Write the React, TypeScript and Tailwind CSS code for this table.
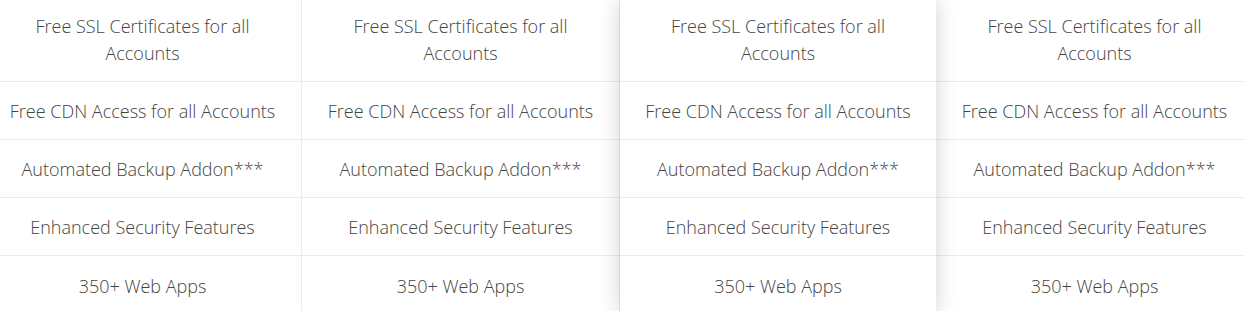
import React from 'react';

const features = [
  'Free SSL Certificates for all Accounts',
  'Free CDN Access for all Accounts',
  'Automated Backup Addon***',
  'Enhanced Security Features',
  '350+ Web Apps',
];

function PlanColumn({ featured = false }: { featured?: boolean }) {
  return (
    <div
      className={
        featured
          ? 'relative z-10 w-[316px] shrink-0 bg-white shadow-[0_0_20px_rgba(0,0,0,0.18)]'
          : 'w-[318px] shrink-0 bg-white border-r border-[#ebebeb]'
      }
    >
      {features.map((f, i) => (
        <div
          key={f}
          className={
            (i === 0 ? 'h-[82px] px-8 pb-[2px] ' : 'h-[58px] px-2 pt-[2px] ') +
            'flex items-center justify-center text-center border-b border-[#ebebeb] last:border-b-0'
          }
        >
          <span className="leading-[27px]">{f}</span>
        </div>
      ))}
    </div>
  );
}

export default function App() {
  return (
    <div
      className="w-[1244px] h-[311px] overflow-hidden bg-white text-[18px] font-light text-[#444]"
      style={{ fontFamily: '"Open Sans", "Liberation Sans", sans-serif' }}
    >
      <div className="flex -ml-[16px]">
        <PlanColumn />
        <PlanColumn />
        <PlanColumn featured />
        <PlanColumn />
      </div>
    </div>
  );
}
